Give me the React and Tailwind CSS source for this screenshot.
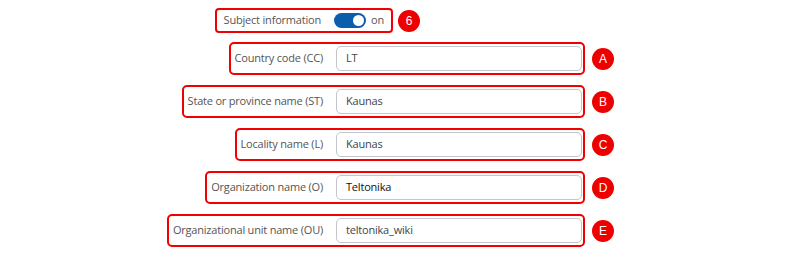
import React from 'react'

const rows = [
    { label: 'Country code (CC)', value: 'LT', badge: 'A' },
    { label: 'State or province name (ST)', value: 'Kaunas', badge: 'B' },
    { label: 'Locality name (L)', value: 'Kaunas', badge: 'C' },
    { label: 'Organization name (O)', value: 'Teltonika', badge: 'D', dark: true },
    { label: 'Organizational unit name (OU)', value: 'teltonika_wiki', badge: 'E' },
]

const Badge = ({ children }) => (
    <div className='w-[22px] h-[22px] rounded-full bg-[#ee0000] text-white text-[12px] flex items-center justify-center font-["Liberation_Sans",sans-serif]'>
        {children}
    </div>
)

const App = () => {
    return (
        <div className='w-[800px] h-[257px] bg-white pt-[8px] font-["Open_Sans",sans-serif] text-[11px] tracking-[-0.2px]'>
            <div className='flex items-center'>
                <div className='w-[393px] flex justify-end'>
                    <div className='flex items-center h-[25px] border-2 border-[#f20000] rounded-[4px] pl-[7px]'>
                        <span className='text-[#555]'>Subject information</span>
                        <div className='w-[57px] ml-[13px] flex items-center'>
                            <div className='w-[32px] h-[15px] rounded-full bg-[#0c5dac] flex items-center justify-end pr-[2px]'>
                                <div className='w-[11px] h-[11px] rounded-full bg-white'></div>
                            </div>
                            <span className='ml-[5px] text-[#555]'>on</span>
                        </div>
                    </div>
                </div>
                <div className='ml-[5px]'><Badge>6</Badge></div>
            </div>
            <div className='flex flex-col gap-[10px] mt-[9px]'>
                {rows.map((r) => (
                    <div key={r.badge} className='flex items-center'>
                        <div className='w-[585px] flex justify-end'>
                            <div className='flex items-center h-[33px] border-2 border-[#f20000] rounded-[5px] pl-[4px] pr-[1px]'>
                                <span className='text-[#555] whitespace-nowrap'>{r.label}</span>
                                <div className={`ml-[13px] w-[246px] h-[25px] border border-[#c4c4cc] rounded-[5px] pl-[9px] flex items-center ${r.dark ? 'text-[#111]' : 'text-[#444]'}`}>
                                    {r.value}
                                </div>
                            </div>
                        </div>
                        <div className='ml-[7px]'><Badge>{r.badge}</Badge></div>
                    </div>
                ))}
            </div>
        </div>
    )
}

export default App
